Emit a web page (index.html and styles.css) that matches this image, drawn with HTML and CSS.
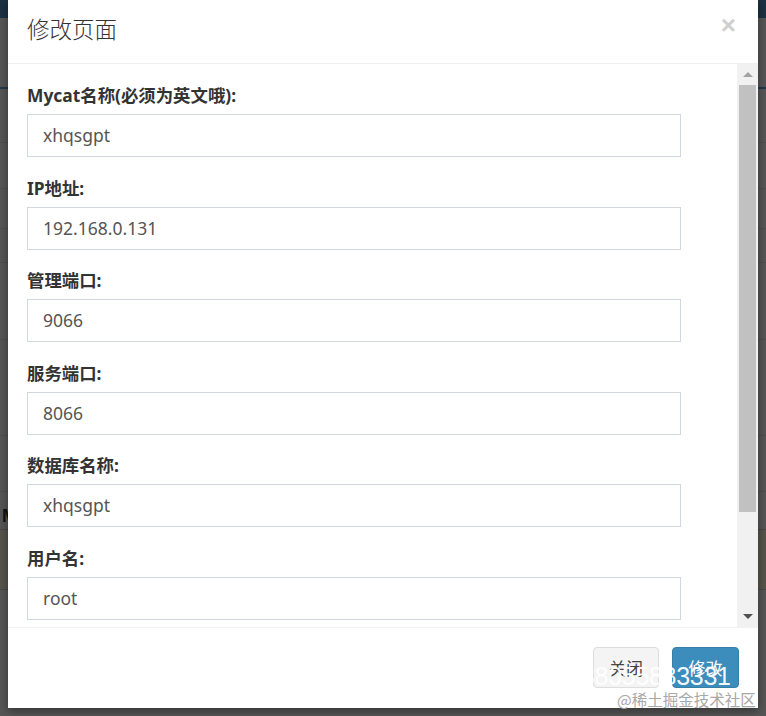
FILE: index.html
```html
<!DOCTYPE html>
<html lang="zh-CN">
<head>
<meta charset="utf-8">
<title>修改页面</title>
<link rel="stylesheet" href="styles.css">
</head>
<body>
<div class="page">
  <div class="bg-top"></div>
  <div class="bg-row r1"></div>
  <div class="bg-row r2"></div>
  <div class="bg-row r3"></div>
  <div class="bg-row r4"></div>
  <div class="bg-row r5"></div>
  <div class="bg-row r6"></div>
  <div class="bg-row r7"></div>
  <div class="bg-row r8"></div>
  <div class="bg-row r9"><span class="bg-m">M</span></div>
  <div class="bg-row r10"></div>
  <div class="bg-row r11"></div>

  <div class="modal">
    <div class="modal-header">
      <h4 class="modal-title">修改页面</h4>
      <span class="close">×</span>
    </div>
    <div class="modal-body">
      <div class="form">
        <div class="form-group">
          <label>Mycat名称(必须为英文哦):</label>
          <div class="input">xhqsgpt</div>
        </div>
        <div class="form-group">
          <label>IP地址:</label>
          <div class="input">192.168.0.131</div>
        </div>
        <div class="form-group">
          <label>管理端口:</label>
          <div class="input">9066</div>
        </div>
        <div class="form-group">
          <label>服务端口:</label>
          <div class="input">8066</div>
        </div>
        <div class="form-group">
          <label>数据库名称:</label>
          <div class="input">xhqsgpt</div>
        </div>
        <div class="form-group">
          <label>用户名:</label>
          <div class="input">root</div>
        </div>
      </div>
      <div class="scrollbar">
        <div class="sb-btn"><span class="tri-up"></span></div>
        <div class="sb-thumb"></div>
        <div class="sb-track"></div>
        <div class="sb-btn"><span class="tri-down"></span></div>
      </div>
    </div>
    <div class="modal-footer">
      <button class="btn btn-default">关闭</button>
      <button class="btn btn-primary">修改</button>
    </div>
  </div>

  <div class="wm-digits">38055883331</div>
  <div class="wm-text">@稀土掘金技术社区</div>
</div>
</body>
</html>
```
FILE: styles.css
```css
* { box-sizing: border-box; }
html, body { margin: 0; padding: 0; }
body {
  width: 766px;
  height: 716px;
  overflow: hidden;
  background: #565656;
  font-family: "Noto Sans", "Noto Sans CJK SC", sans-serif;
}
.page {
  position: relative;
  width: 766px;
  height: 716px;
  background: #565656;
}
.bg-top { height: 18px; background: #1c3142; }
.bg-row { border-bottom: 1px solid #4e4e4e; }
.r1 { height: 71px; border-bottom: 2px solid #1d3a50; }
.r2 { height: 54px; }
.r3 { height: 46px; }
.r4 { height: 40px; }
.r5 { height: 34px; }
.r6 { height: 77px; }
.r7 { height: 96px; }
.r8 { height: 56px; }
.r9 { height: 38px; border-bottom: 1px solid #474747; }
.r10 { height: 60px; background: #56554b; border-bottom: 1px solid #4a4a44; }
.r11 { height: 110px; border-bottom: none; }
.bg-m {
  display: block;
  padding: 14px 0 0 2px;
  font: bold 18px "Liberation Sans", sans-serif;
  color: #111;
}

.modal {
  position: absolute;
  left: 8px;
  top: 0;
  width: 750px;
  height: 708px;
  background: #fff;
  display: flex;
  flex-direction: column;
  box-shadow: 0 3px 9px rgba(0,0,0,.4);
}
.modal-header {
  height: 64px;
  flex: none;
  display: flex;
  justify-content: space-between;
  align-items: flex-start;
  padding: 12px 22px 0 19px;
  border-bottom: 1px solid #f0f0f0;
}
.modal-title {
  margin: 0;
  font-family: "Noto Sans CJK SC", sans-serif;
  font-weight: 300;
  font-size: 22.5px;
  line-height: 32px;
  color: #333;
}
.close {
  font: bold 26px/26px "Liberation Sans", sans-serif;
  color: #cfcfcf;
  margin-top: 0;
}
.modal-body {
  height: 563px;
  flex: none;
  display: flex;
  overflow: hidden;
}
.form {
  flex: 1;
  overflow: hidden;
  padding: 19px 0 0 19px;
}
.form-group { margin-bottom: 18.6px; }
.form-group label {
  display: block;
  font-weight: bold;
  font-size: 17.4px;
  line-height: 25px;
  height: 25px;
  color: #333;
  margin-bottom: 6px;
}
.input {
  width: 654px;
  height: 43px;
  border: 1px solid #d2d6de;
  padding: 0 15px;
  font-size: 17.5px;
  line-height: 41px;
  color: #555;
}
.scrollbar {
  width: 21px;
  flex: none;
  background: #f1f1f1;
  display: flex;
  flex-direction: column;
}
.sb-btn {
  height: 21px;
  display: flex;
  align-items: center;
  justify-content: center;
}
.tri-up {
  width: 0; height: 0;
  border-left: 5px solid transparent;
  border-right: 5px solid transparent;
  border-bottom: 5px solid #a3a3a3;
}
.tri-down {
  width: 0; height: 0;
  border-left: 5px solid transparent;
  border-right: 5px solid transparent;
  border-top: 5px solid #505050;
}
.sb-thumb {
  height: 427px;
  margin: 0 2px;
  background: #c1c1c1;
}
.sb-track { flex: 1; }
.modal-footer {
  flex: 1;
  border-top: 1px solid #f1f1f1;
  display: flex;
  justify-content: flex-end;
  align-items: flex-start;
  gap: 13px;
  padding: 19px 19px 0 0;
}
.btn {
  font-family: "Noto Sans CJK SC", sans-serif;
  font-size: 17px;
  line-height: 25px;
  padding: 7px 15px;
  border-radius: 4px;
  border: 1px solid transparent;
  height: 41px;
  width: 67px;
}
.btn-default {
  background: #f4f4f4;
  border-color: #ddd;
  color: #444;
  width: 66px;
}
.btn-primary {
  background: #3c8dbc;
  border-color: #367fa9;
  color: #fff;
}
.wm-digits {
  position: absolute;
  left: 581px;
  top: 661px;
  font: 25px/30px "Liberation Sans", sans-serif;
  color: rgba(255,255,255,.95);
  letter-spacing: -0.3px;
  white-space: nowrap;
  pointer-events: none;
}
.wm-text {
  position: absolute;
  left: 617px;
  top: 689px;
  font-family: "Noto Sans CJK SC", sans-serif;
  font-size: 15.5px;
  line-height: 20px;
  color: #a8a8a8;
  white-space: nowrap;
}
```
